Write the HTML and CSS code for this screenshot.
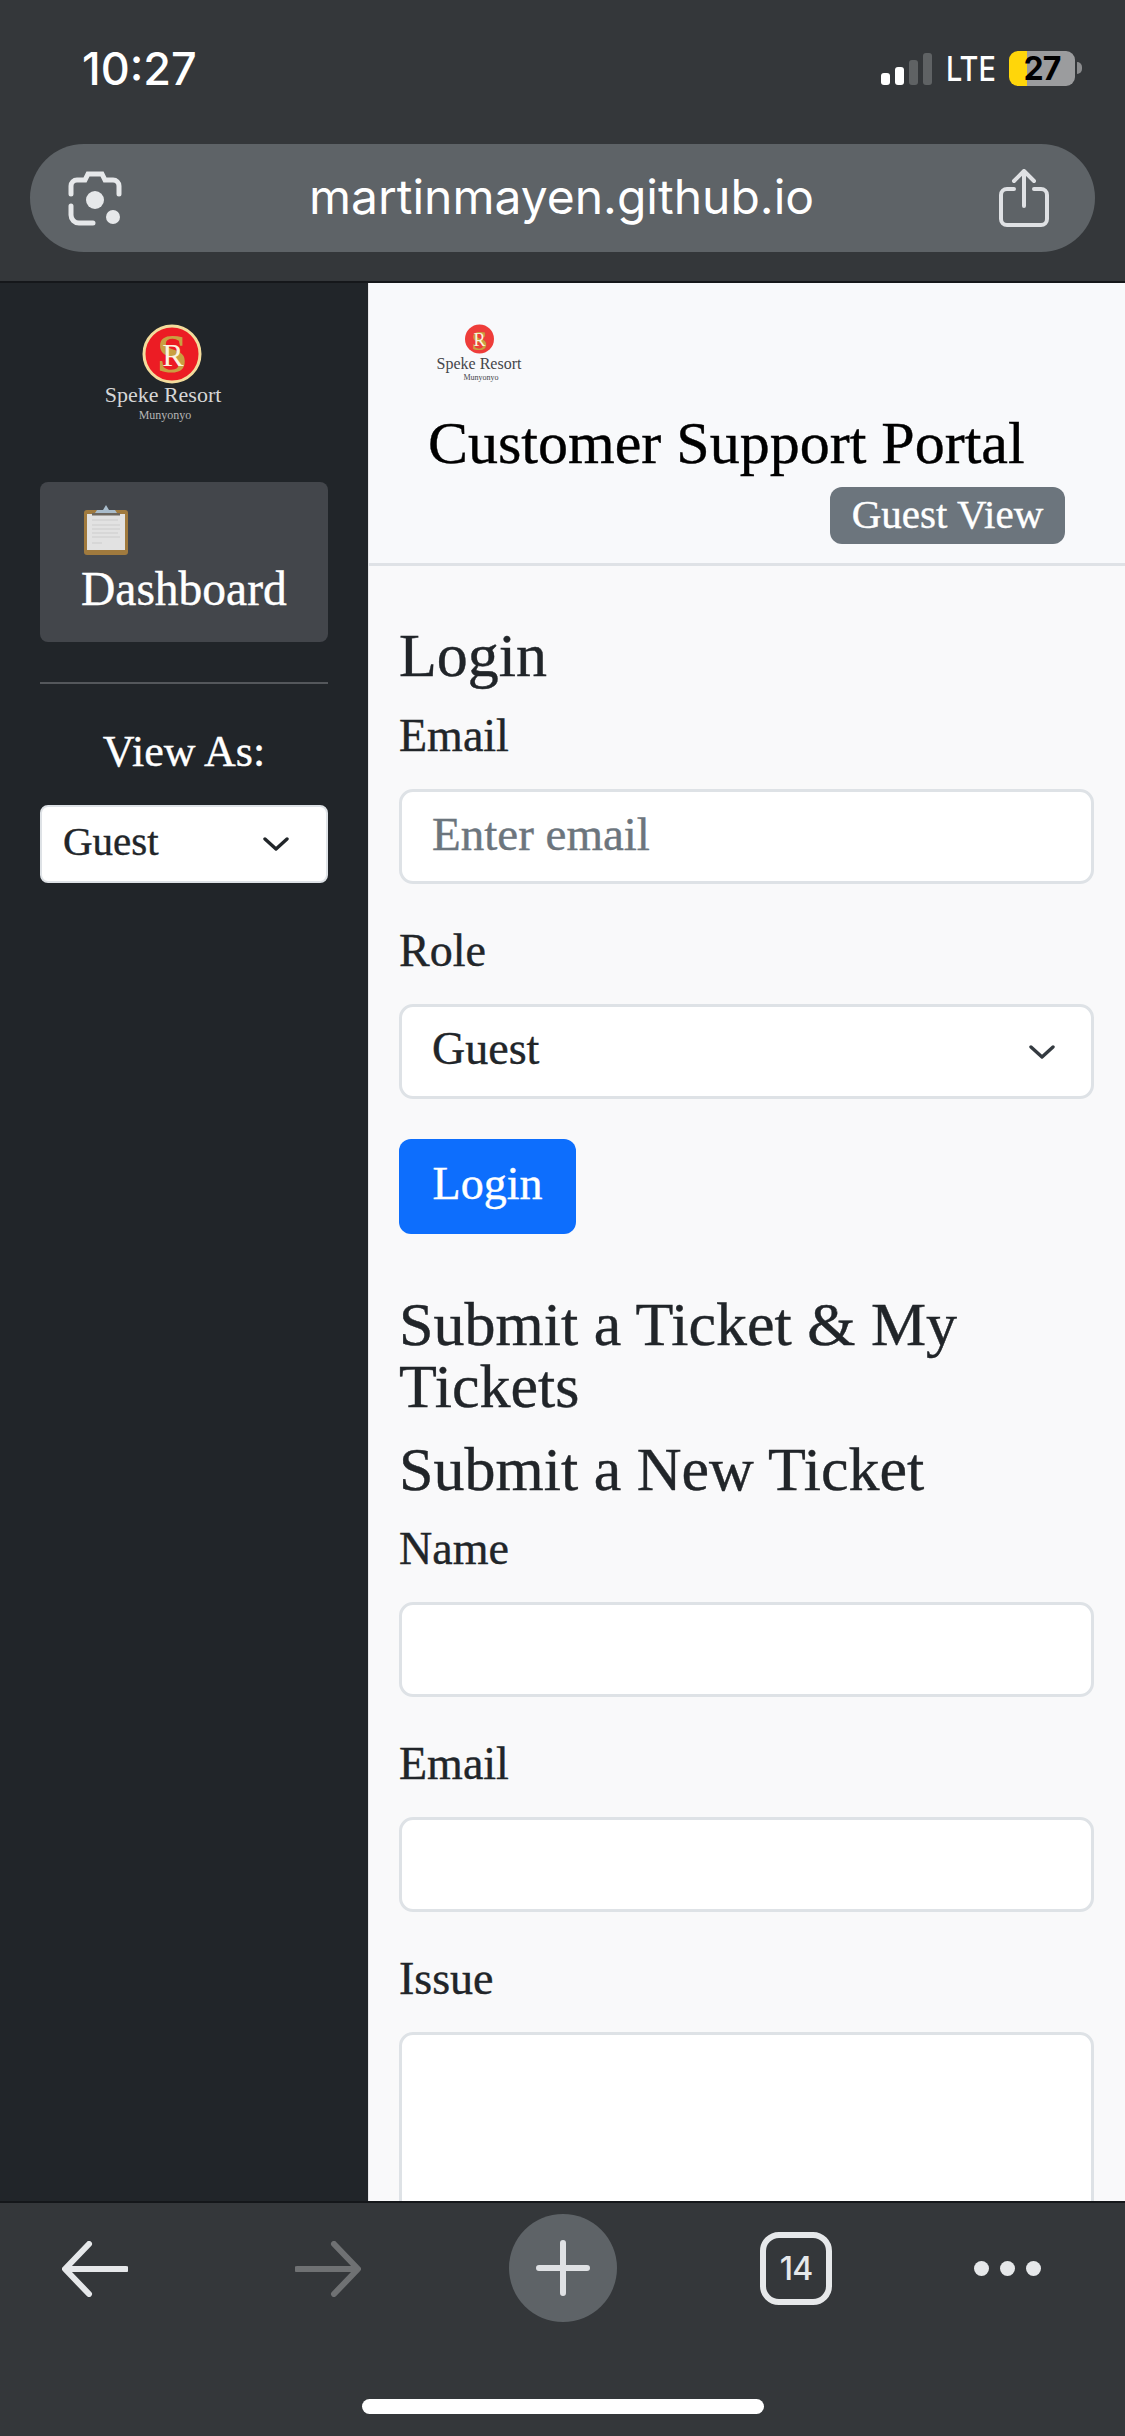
FILE: index.html
```html
<!DOCTYPE html>
<html lang="en">

<head>
    <meta charset="UTF-8">
    <meta name="viewport" content="width=device-width, initial-scale=1.0">
    <title>Customer Support Portal</title>
    <link rel="stylesheet" href="styles.css">
</head>

<body>

    <div class="topbar">
        <div class="status">
            <span class="clock">10:27</span>
            <div class="status-right">
                <div class="signal">
                    <span class="bar bar1"></span>
                    <span class="bar bar2"></span>
                    <span class="bar bar3 off"></span>
                    <span class="bar bar4 off"></span>
                </div>
                <span class="lte">LTE</span>
                <div class="battery">27</div>
                <span class="battery-cap"></span>
            </div>
        </div>
        <div class="urlbar">
            <svg class="lens" width="54" height="56" viewBox="0 0 54 56" fill="none" stroke="#e6e8ea" stroke-width="5" stroke-linecap="round">
                <path d="M3 24v-8a6 6 0 0 1 6-6h8l3-6h14l3 6h8a6 6 0 0 1 6 6v8" />
                <path d="M3 36v9a8 8 0 0 0 8 8h14" />
                <circle cx="27" cy="30" r="9" fill="#e6e8ea" stroke="none" />
                <circle cx="45" cy="47" r="7" fill="#e6e8ea" stroke="none" />
            </svg>
            <span class="url">martinmayen.github.io</span>
            <svg class="share" width="50" height="58" viewBox="0 0 50 58" fill="none" stroke="#dfe1e4" stroke-width="4" stroke-linecap="round" stroke-linejoin="round">
                <path d="M25 37V3M15 12l10-10 10 10" />
                <path d="M15 20H8a6 6 0 0 0-6 6v24a6 6 0 0 0 6 6h34a6 6 0 0 0 6-6V26a6 6 0 0 0-6-6h-7" />
            </svg>
        </div>
    </div>

    <div class="page">
        <div class="sidebar">
            <svg class="side-logo" width="288" height="103" viewBox="0 0 288 103">
                <circle cx="132" cy="31" r="28" fill="#ec1c24" stroke="#f3dc9c" stroke-width="3" />
                <text x="132" y="49" text-anchor="middle" class="mono-s" font-size="54">S</text>
                <text x="133" y="43" text-anchor="middle" class="mono-r" font-size="32">R</text>
                <text x="123" y="79" text-anchor="middle" class="logo-name" font-size="22">Speke Resort</text>
                <text x="125" y="96" text-anchor="middle" class="logo-sub" font-size="12">Munyonyo</text>
            </svg>
            <div class="side-card">
                <svg class="clip" width="44" height="50" viewBox="0 0 44 50">
                    <rect x="0" y="5" width="44" height="45" rx="3" fill="#a07a3e" />
                    <rect x="3" y="9" width="38" height="36" fill="#e2e2e2" />
                    <path d="M8 15h26M8 20h28M8 24h28M8 28h26M8 32h28M8 38h10" stroke="#cbcbcb" stroke-width="1.2" />
                    <path d="M11 8l2-3h6l3-5 3 5h6l2 3z" fill="#a9bccb" />
                    <rect x="8" y="8" width="28" height="2.5" fill="#6d675f" />
                </svg>
                <div class="side-link">Dashboard</div>
            </div>
            <hr class="side-rule">
            <div class="view-as">View As:</div>
            <div class="side-select">
                <span class="select-text">Guest</span>
                <svg width="26" height="14" viewBox="0 0 26 14" fill="none" stroke="#212529" stroke-width="3.4" stroke-linecap="round" stroke-linejoin="round">
                    <path d="M2 2l11 10L24 2" />
                </svg>
            </div>
        </div>

        <div class="main">
            <div class="header">
                <svg class="head-logo" width="100" height="66" viewBox="0 0 100 66">
                    <circle cx="43.5" cy="16" r="14.5" fill="#ee3d3a" />
                    <text x="43.5" y="27" text-anchor="middle" class="mono-s" font-size="28">S</text>
                    <text x="43.5" y="23" text-anchor="middle" class="mono-r" font-size="18">R</text>
                    <text x="43" y="46" text-anchor="middle" class="logo-dark" font-size="16">Speke Resort</text>
                    <text x="45" y="57" text-anchor="middle" class="logo-dark" font-size="8">Munyonyo</text>
                </svg>
                <h1 class="title">Customer Support Portal</h1>
                <span class="badge">Guest View</span>
            </div>

            <div class="content">
                <h2 class="login-title">Login</h2>
                <div class="field">
                    <label>Email</label>
                    <div class="input placeholder">Enter email</div>
                </div>
                <div class="field">
                    <label>Role</label>
                    <div class="input select">
                        <span class="select-text">Guest</span>
                        <svg width="26" height="14" viewBox="0 0 26 14" fill="none" stroke="#343a40" stroke-width="3.4" stroke-linecap="round" stroke-linejoin="round">
                            <path d="M2 2l11 10L24 2" />
                        </svg>
                    </div>
                </div>
                <button class="btn">Login</button>

                <h2 class="section-title">Submit a Ticket &amp; My Tickets</h2>
                <h2 class="sub-title">Submit a New Ticket</h2>
                <div class="field">
                    <label>Name</label>
                    <div class="input"></div>
                </div>
                <div class="field">
                    <label>Email</label>
                    <div class="input"></div>
                </div>
                <div class="field">
                    <label>Issue</label>
                    <div class="input textarea"></div>
                </div>
            </div>
        </div>
    </div>

    <div class="bottombar">
        <div class="nav">
            <svg class="nav-back" width="66" height="56" viewBox="0 0 66 56" fill="none" stroke="#e6e8ea" stroke-width="6" stroke-linecap="round" stroke-linejoin="round">
                <path d="M64 28H4M27 3L3 28l24 25" />
            </svg>
            <svg class="nav-forward" width="66" height="56" viewBox="0 0 66 56" fill="none" stroke="#6f7173" stroke-width="6" stroke-linecap="round" stroke-linejoin="round">
                <path d="M2 28h60M39 3l24 25-24 25" />
            </svg>
            <div class="nav-plus">
                <svg width="54" height="56" viewBox="0 0 54 56" fill="none" stroke="#dfe1e4" stroke-width="6" stroke-linecap="round">
                    <path d="M27 3v50M3 28h48" />
                </svg>
            </div>
            <div class="nav-tabs">14</div>
            <div class="nav-dots"><span></span><span></span><span></span></div>
        </div>
        <div class="home"></div>
    </div>

</body>

</html>
```

FILE: styles.css
```css
body {
    margin: 0;
    width: 1125px;
    height: 2436px;
    overflow: hidden;
    display: flex;
    flex-direction: column;
    font-family: 'Liberation Serif', serif;
    background: #34373a;
}

.topbar {
    height: 283px;
    flex: none;
    box-sizing: border-box;
    padding: 45px 30px 0;
    background: #34373a;
    border-bottom: 2px solid #15171a;
    font-family: Inter, 'Liberation Sans', sans-serif;
    color: #fff;
}

.status {
    height: 46px;
    display: flex;
    justify-content: space-between;
    align-items: center;
    padding: 0 13px 0 52px;
}

.clock {
    font-size: 45px;
    font-weight: 500;
}

.status-right {
    display: flex;
    align-items: center;
}

.signal {
    display: flex;
    align-items: flex-end;
    gap: 5px;
    height: 32px;
    margin-top: 2px;
}

.bar {
    width: 9px;
    border-radius: 3px;
    background: #fff;
}

.bar1 {
    height: 12px;
}

.bar2 {
    height: 18px;
}

.bar3 {
    height: 25px;
}

.bar4 {
    height: 32px;
}

.off {
    background: #5f6264;
}

.lte {
    margin-left: 14px;
    font-size: 34px;
    font-weight: 500;
    width: 63px;
    transform: scaleX(0.85);
    transform-origin: left center;
}

.battery {
    width: 66px;
    height: 35px;
    border-radius: 9px;
    background: linear-gradient(90deg, #ffd60a 18px, #9b9c9e 18px);
    color: #000;
    font-size: 32px;
    line-height: 36px;
    font-weight: 700;
    letter-spacing: -1px;
    text-align: center;
}

.battery-cap {
    width: 5px;
    height: 12px;
    margin-left: 2px;
    border-radius: 0 6px 6px 0;
    background: #8b8c8e;
}

.urlbar {
    margin-top: 53px;
    height: 108px;
    border-radius: 54px;
    background: #5e6367;
    display: flex;
    align-items: center;
    justify-content: space-between;
    padding: 0 46px 0 38px;
}

.url {
    font-size: 48px;
    font-weight: 400;
    color: #fff;
    padding-bottom: 4px;
    margin-left: 2px;
}

.page {
    flex: 1;
    min-height: 0;
    display: flex;
    overflow: hidden;
    -webkit-text-stroke: 0.4px currentColor;
}

.sidebar {
    width: 368px;
    flex: none;
    box-sizing: border-box;
    padding: 40px 40px 0;
    background: #212529;
    color: #fff;
}

.side-logo {
    display: block;
}

.mono-s {
    font-family: 'Liberation Serif', serif;
    font-weight: 700;
    fill: #c9a041;
}

.mono-r {
    font-family: 'Liberation Serif', serif;
    fill: #fbf3df;
}

.logo-name {
    font-family: 'Liberation Serif', serif;
    fill: #d6d6d6;
}

.logo-sub {
    font-family: 'Liberation Serif', serif;
    fill: #b5b5b5;
}

.logo-dark {
    font-family: 'Liberation Serif', serif;
    fill: #45464a;
}

.side-card {
    margin-top: 56px;
    height: 160px;
    box-sizing: border-box;
    padding: 23px 41px 0;
    border-radius: 8px;
    background: #43464b;
}

.clip {
    display: block;
    margin-left: 3px;
}

.side-link {
    font-size: 47.5px;
    line-height: 60px;
    margin-top: 4px;
}

.side-rule {
    margin: 40px 0 0;
    border: 0;
    border-top: 2px solid #54575b;
}

.view-as {
    margin-top: 43px;
    font-size: 44px;
    line-height: 50px;
    text-align: center;
}

.side-select {
    margin-top: 28px;
    height: 78px;
    box-sizing: border-box;
    padding: 0 37px 0 21px;
    border: 2px solid #dee2e6;
    border-radius: 8px;
    background: #fff;
    color: #212529;
    font-size: 41px;
    display: flex;
    align-items: center;
    justify-content: space-between;
}

.select-text {
    margin-top: -6px;
}

.main {
    flex: 1;
    min-width: 0;
    background: #f9f9fa;
    border-left: 1px solid #e6e7e9;
    color: #212529;
}

.header {
    height: 283px;
    box-sizing: border-box;
    padding: 40px 60px 0 59px;
    background: #f8f9fb;
    border-bottom: 3px solid #dfe2e6;
    display: flex;
    flex-direction: column;
    align-items: flex-start;
}

.head-logo {
    display: block;
    margin-left: 8px;
}

.title {
    margin: 19px 0 0;
    font-size: 60px;
    line-height: 70px;
    font-weight: 400;
    color: #000;
}

.badge {
    align-self: flex-end;
    margin-top: 9px;
    height: 57px;
    width: 235px;
    box-sizing: border-box;
    border-radius: 12px;
    background: #6c757d;
    color: #fff;
    font-size: 41px;
    line-height: 55px;
    text-align: center;
}

.content {
    padding: 57px 31px 0 30px;
}

.login-title {
    margin: 0 0 23px;
    font-size: 62px;
    line-height: 64px;
    font-weight: 400;
}

.field {
    margin-bottom: 39px;
}

label {
    display: block;
    font-size: 46px;
    line-height: 56px;
    margin-bottom: 25px;
}

.login-title + .field label {
    margin-top: -2px;
}

.input {
    height: 95px;
    box-sizing: border-box;
    padding: 0 30px;
    border: 3px solid #dee2e6;
    border-radius: 14px;
    background: #fff;
    font-size: 46px;
    line-height: 84px;
}

.placeholder {
    color: #6c757d;
    font-size: 47px;
}

.select {
    display: flex;
    align-items: center;
    justify-content: space-between;
    padding-right: 36px;
}

.textarea {
    height: 300px;
}

.btn {
    display: block;
    width: 177px;
    height: 95px;
    margin-top: 40px;
    padding: 0 0 6px;
    border: 0;
    border-radius: 12px;
    background: #0d6efd;
    color: #fff;
    font-family: inherit;
    font-size: 46px;
    -webkit-text-stroke: inherit;
}

.section-title {
    margin: 59px 0 21px;
    font-size: 62px;
    line-height: 62px;
    font-weight: 400;
}

.sub-title {
    margin: 0 0 21px;
    font-size: 62px;
    line-height: 62px;
    font-weight: 400;
}

.bottombar {
    flex: none;
    height: 235px;
    box-sizing: border-box;
    padding-top: 11px;
    border-top: 2px solid #15171a;
    background: #34373a;
}

.nav {
    height: 108px;
    display: flex;
    align-items: center;
    padding-left: 62px;
}

.nav-back,
.nav-forward,
.nav-tabs,
.nav-dots {
    margin-top: 1px;
}

.nav-forward {
    margin-left: 167px;
}

.nav-plus {
    margin-left: 148px;
    width: 108px;
    height: 108px;
    border-radius: 50%;
    background: #5e6367;
    display: flex;
    align-items: center;
    justify-content: center;
}

.nav-tabs {
    margin-left: 143px;
    width: 72px;
    height: 73px;
    box-sizing: border-box;
    border: 6px solid #e6e8ea;
    border-radius: 19px;
    color: #e6e8ea;
    font-family: Inter, 'Liberation Sans', sans-serif;
    font-size: 32px;
    font-weight: 500;
    letter-spacing: -1px;
    line-height: 61px;
    text-align: center;
}

.nav-dots {
    margin-left: 142px;
    display: flex;
    gap: 11px;
}

.nav-dots span {
    width: 15px;
    height: 15px;
    border-radius: 50%;
    background: #e6e8ea;
}

.home {
    width: 402px;
    height: 15px;
    margin: 77px auto 0;
    border-radius: 8px;
    background: #fff;
}
```
